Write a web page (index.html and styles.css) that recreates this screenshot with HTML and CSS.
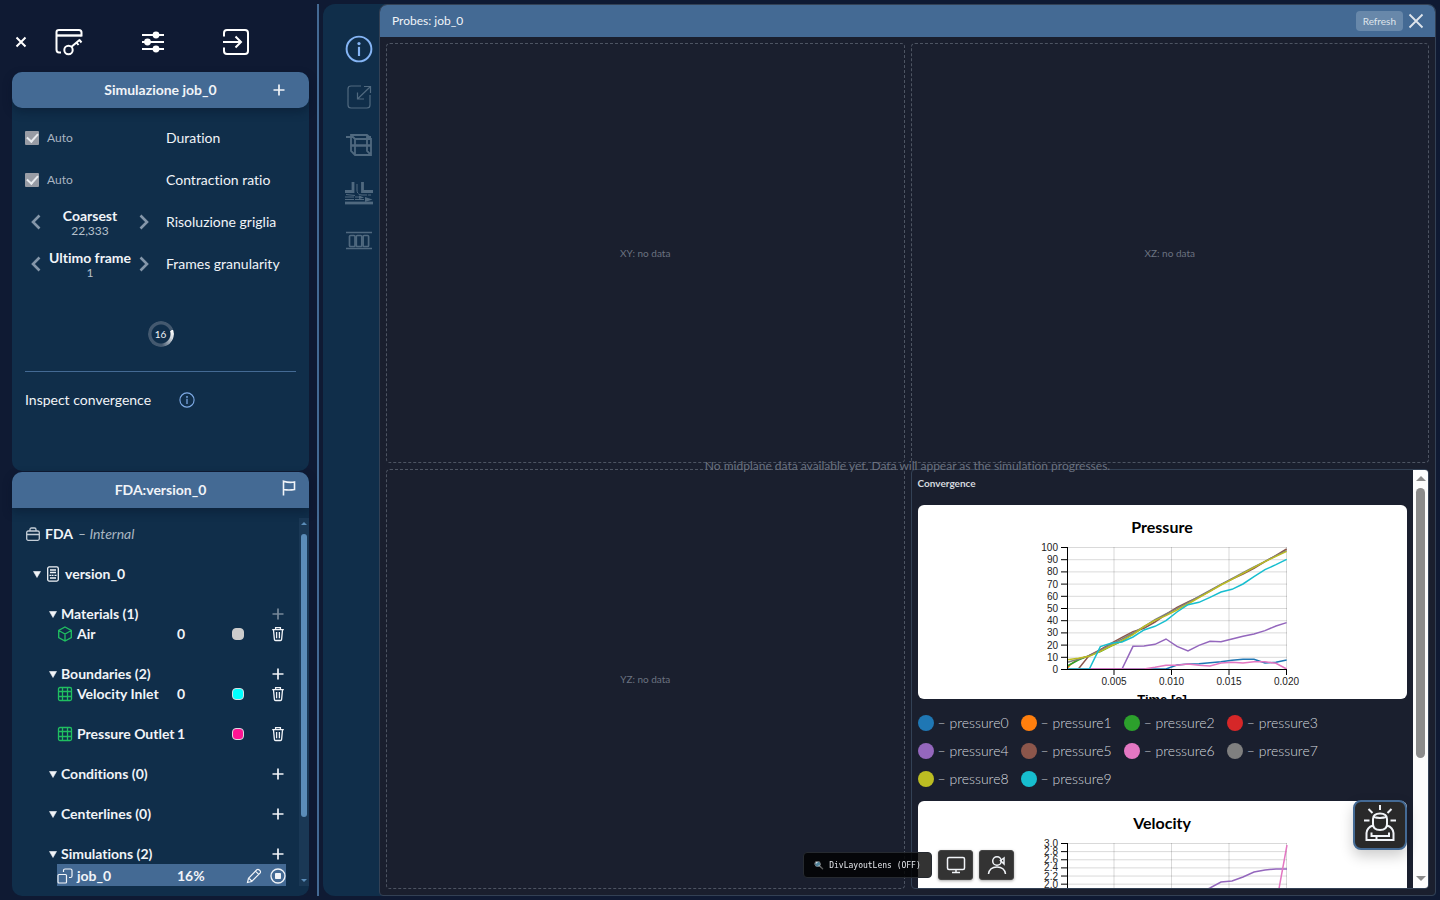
FILE: index.html
```html
<!DOCTYPE html>
<html lang="it">
<head>
<meta charset="utf-8">
<title>Simulazione job_0</title>
<link rel="stylesheet" href="styles.css">
</head>
<body>
<svg class="defs" aria-hidden="true">
  <symbol id="plus" viewBox="0 0 12 12"><path d="M6 .5v11M.5 6h11" fill="none" stroke="currentColor" stroke-width="1.7"/></symbol>
  <symbol id="trash" viewBox="0 0 16 16"><path d="M2.2 3.7h11.6M5.6 3.5V1.6h4.8v1.9M3.5 4l.9 9.4q.1 1.1 1.2 1.1h4.8q1.1 0 1.2-1.1l.9-9.4M6.6 6v6.2M9.4 6v6.2" fill="none" stroke="currentColor" stroke-width="1.3"/></symbol>
  <symbol id="mesh" viewBox="0 0 16 16"><rect x="1.500" y="1.500" width="13" height="13" rx="1.500" fill="none" stroke="currentColor" stroke-width="1.300"/><path d="M1 5.500h14M1 10.500h14M5.500 1v14M10.500 1v14" fill="none" stroke="currentColor" stroke-width="1.300"/></symbol>
  <symbol id="info" viewBox="0 0 26 26"><circle cx="13" cy="13" r="11.500" fill="none" stroke="currentColor" stroke-width="1.800"/><circle cx="13" cy="8" r="1.500" fill="currentColor"/><path d="M13 11v8.500" fill="none" stroke="currentColor" stroke-width="2"/></symbol>
  <symbol id="left" viewBox="0 0 10 16"><path d="M8.500 1.500 2 8l6.500 6.500" fill="none" stroke="currentColor" stroke-width="2.600"/></symbol>
  <symbol id="right" viewBox="0 0 10 16"><path d="M1.500 1.500 8 8l-6.500 6.500" fill="none" stroke="currentColor" stroke-width="2.600"/></symbol>
  <symbol id="caret" viewBox="0 0 8 7"><path d="M.5.500h7L4 6.500z" fill="currentColor" stroke="currentColor" stroke-width=".6"/></symbol>
</svg>
<div class="app">
  <aside class="sidebar">
    <nav class="topbar">
      <button class="icon-btn close" aria-label="Chiudi"><svg width="12" height="12" viewBox="0 0 12 12"><path d="M1.500 1.500l9 9M10.500 1.500l-9 9" fill="none" stroke="currentColor" stroke-width="2"/></svg></button>
      <button class="icon-btn" aria-label="Accesso"><svg width="28" height="28" viewBox="0 0 28 28" fill="none" stroke="currentColor" stroke-width="2"><path d="M6 24.500H4Q1.500 24.500 1.500 21.500V4Q1.500 2 4 2h20q2.500 0 2.500 2.500v4"/><path d="M1.500 7.500h25" stroke-width="2.400"/><circle cx="13.500" cy="22" r="4.200"/><path d="M16.500 18.800 24.500 12M24 11.500l2.500 3M21.500 14.500l2 2.500"/></svg></button>
      <button class="icon-btn" aria-label="Impostazioni"><svg width="24" height="24" viewBox="0 0 24 24"><path d="M1 5h22M1 12h22M1 19h22" stroke="currentColor" stroke-width="2"/><g fill="currentColor"><circle cx="15" cy="5" r="3.400"/><circle cx="6.500" cy="12" r="3.400"/><circle cx="15" cy="19" r="3.400"/></g></svg></button>
      <button class="icon-btn" aria-label="Esci"><svg width="28" height="28" viewBox="0 0 28 28" fill="none" stroke="currentColor" stroke-width="2"><path d="M1 8.500V5Q1 2 4 2h18q3 0 3 3v18q0 3-3 3H4q-3 0-3-3v-3.500M0 14h18M12.500 8.500 18 14l-5.500 5.500"/></svg></button>
    </nav>

    <section class="panel">
      <header class="panel-head rounded"><h2>Simulazione job_0</h2><button class="icon-btn head-action plus-head" aria-label="Aggiungi"><svg width="12" height="12"><use href="#plus"/></svg></button></header>
      <div class="settings">
        <div class="setting"><label class="auto"><input type="checkbox" checked disabled>Auto</label><span>Duration</span></div>
        <div class="setting"><label class="auto"><input type="checkbox" checked disabled>Auto</label><span>Contraction ratio</span></div>
        <div class="setting"><div class="stepper"><button class="icon-btn" aria-label="Precedente"><svg width="10" height="16"><use href="#left"/></svg></button><span class="step-value"><b>Coarsest</b><small>22,333</small></span><button class="icon-btn" aria-label="Successivo"><svg width="10" height="16"><use href="#right"/></svg></button></div><span>Risoluzione griglia</span></div>
        <div class="setting"><div class="stepper"><button class="icon-btn" aria-label="Precedente"><svg width="10" height="16"><use href="#left"/></svg></button><span class="step-value"><b>Ultimo frame</b><small>1</small></span><button class="icon-btn" aria-label="Successivo"><svg width="10" height="16"><use href="#right"/></svg></button></div><span>Frames granularity</span></div>
        <div class="progress"><span>16</span></div>
        <hr>
        <div class="inspect"><span>Inspect convergence</span><button class="icon-btn" aria-label="Informazioni"><svg width="16" height="16"><use href="#info"/></svg></button></div>
      </div>
    </section>

    <section class="panel grow">
      <header class="panel-head"><h2>FDA:version_0</h2><button class="icon-btn head-action flag-head" aria-label="Segnala"><svg width="14" height="16" viewBox="0 0 14 16"><path d="M1.500 15.500V1.200Q7 3 12.500 2v7.500Q7 10.500 1.500 9.500" fill="none" stroke="currentColor" stroke-width="1.600"/></svg></button></header>
      <div class="tree-wrap">
        <div class="tree">
          <div class="row project"><svg width="14" height="14" viewBox="0 0 14 14" fill="none" stroke="currentColor" stroke-width="1.300"><rect x=".7" y="4" width="12.600" height="9.300" rx="1.500"/><path d="M4 4V2.500Q4 1 5.500 1h3Q10 1 10 2.500V4M.7 7.500h12.600"/></svg><b>FDA</b><i>– Internal</i></div>
          <div class="row version apart"><svg width="8" height="7"><use href="#caret"/></svg><svg width="12" height="16" viewBox="0 0 12 16" fill="none" stroke="currentColor" stroke-width="1.300"><rect x=".7" y=".9" width="10.600" height="14.200" rx="1.500"/><path d="M3 4h6M3 6.500h6M2.500 9.300h2M5 9.300h1.500M7.500 9.300h2M3 12h6"/></svg><b>version_0</b></div>
          <div class="row group apart"><svg width="8" height="7"><use href="#caret"/></svg><b>Materials (1)</b><button class="icon-btn dim" aria-label="Aggiungi"><svg width="12" height="12"><use href="#plus"/></svg></button></div>
          <div class="row leaf"><svg class="green" width="16" height="16" viewBox="0 0 16 16" fill="none" stroke="currentColor" stroke-width="1.300"><path d="M8 1l6.300 3.500v7L8 15l-6.300-3.500v-7zM1.700 4.500 8 8l6.300-3.500M8 8v7"/></svg><b class="name">Air</b><b>0</b><span class="actions"><button class="swatch silver" aria-label="Colore"></button><button class="icon-btn" aria-label="Elimina"><svg width="16" height="16"><use href="#trash"/></svg></button></span></div>
          <div class="row group apart"><svg width="8" height="7"><use href="#caret"/></svg><b>Boundaries (2)</b><button class="icon-btn" aria-label="Aggiungi"><svg width="12" height="12"><use href="#plus"/></svg></button></div>
          <div class="row leaf"><svg class="green" width="16" height="16"><use href="#mesh"/></svg><b class="name">Velocity Inlet</b><b>0</b><span class="actions"><button class="swatch cyan" aria-label="Colore"></button><button class="icon-btn" aria-label="Elimina"><svg width="16" height="16"><use href="#trash"/></svg></button></span></div>
          <div class="row leaf apart"><svg class="green" width="16" height="16"><use href="#mesh"/></svg><b class="name">Pressure Outlet</b><b>1</b><span class="actions"><button class="swatch pink" aria-label="Colore"></button><button class="icon-btn" aria-label="Elimina"><svg width="16" height="16"><use href="#trash"/></svg></button></span></div>
          <div class="row group apart"><svg width="8" height="7"><use href="#caret"/></svg><b>Conditions (0)</b><button class="icon-btn" aria-label="Aggiungi"><svg width="12" height="12"><use href="#plus"/></svg></button></div>
          <div class="row group apart"><svg width="8" height="7"><use href="#caret"/></svg><b>Centerlines (0)</b><button class="icon-btn" aria-label="Aggiungi"><svg width="12" height="12"><use href="#plus"/></svg></button></div>
          <div class="row group apart"><svg width="8" height="7"><use href="#caret"/></svg><b>Simulations (2)</b><button class="icon-btn" aria-label="Aggiungi"><svg width="12" height="12"><use href="#plus"/></svg></button></div>
          <div class="row leaf selected"><svg width="16" height="16" viewBox="0 0 16 16" fill="none" stroke="currentColor" stroke-width="1.200"><rect x="1" y="6.500" width="8.500" height="8.500" rx="1"/><path d="M6.500 4V2.500Q6.500 1 8 1h5.500Q15 1 15 2.500V8q0 1.500-1.500 1.500H12"/></svg><b class="name">job_0</b><b>16%</b><span class="actions tight"><button class="icon-btn" aria-label="Modifica"><svg width="16" height="16" viewBox="0 0 16 16" fill="none" stroke="currentColor" stroke-width="1.200"><path d="M1.500 14.500l1-4.200 8.300-8.500q1.200-1 2.500.2l.7.700q1 1.200 0 2.400L5.700 13.500zM9.500 3.200l3.200 3.200M2.500 10.300q2.200.5 3.200 3.200"/></svg></button><button class="icon-btn" aria-label="Ferma"><svg width="16" height="16" viewBox="0 0 16 16"><circle cx="8" cy="8" r="7" fill="none" stroke="currentColor" stroke-width="1.300"/><rect x="5" y="5" width="6" height="6" rx=".8" fill="currentColor"/></svg></button></span></div>
        </div>
        <div class="tree-scroll"><i class="arrow up"></i><i class="thumb"></i><i class="arrow down"></i></div>
      </div>
    </section>
  </aside>
  <div class="divider"></div>

  <main class="stage">
    <nav class="tools">
      <button class="icon-btn active" aria-label="Informazioni"><svg width="28" height="28"><use href="#info"/></svg></button>
      <button class="icon-btn" aria-label="Riduci"><svg width="28" height="28" viewBox="0 0 28 28" fill="none" stroke="currentColor" stroke-width="1.200"><path d="M16 3H6Q3 3 3 6v16q0 3 3 3h16q3 0 3-3V12M25.500 10V3.500H19M25 4 12.500 16M12.500 9.500V16H19"/></svg></button>
      <button class="icon-btn" aria-label="Volume"><svg width="28" height="28" viewBox="0 0 28 28" fill="none" stroke="currentColor" stroke-width="1.800"><path d="M1 6h5M6 4h16l4 3.500v16.500H10l-4-4zM6 4l4 4h16M10 8v16M22 4v16l4 4M22 6h4"/><path d="M6 14.500h20" stroke-width="2.500"/></svg></button>
      <button class="icon-btn" aria-label="Flusso"><svg width="28" height="28" viewBox="0 0 28 28" fill="none" stroke="currentColor"><path d="M0 12.500h8V3M28 12.500H17.500V3" stroke-width="2.800"/><path d="M0 24h28" stroke-width="2.800"/><path d="M12 5v6q0 5 5 5h9M0 18h16M0 20.500h23M1 15.500l9 1" stroke-dasharray="9 1"/><path d="M20 18l7.500 2.500L20 23zM14 16.500l5 2-5 1.500z" fill="currentColor" stroke="none"/></svg></button>
      <button class="icon-btn" aria-label="Fotogrammi"><svg width="28" height="28" viewBox="0 0 28 28" fill="none" stroke="currentColor" stroke-width="1.700"><path d="M1 5.500h26M1 21.500h26"/><rect x="4.500" y="8.500" width="5.500" height="11" rx="1"/><rect x="11.300" y="8.500" width="5.500" height="11" rx="1"/><rect x="18.100" y="8.500" width="5.500" height="11" rx="1"/></svg></button>
    </nav>
    <section class="window">
      <header class="window-head"><span>Probes: job_0</span><div class="window-actions"><button class="refresh">Refresh</button><button class="icon-btn" aria-label="Chiudi"><svg width="16" height="16" viewBox="0 0 16 16"><path d="M1.500 1.500l13 13M14.500 1.500l-13 13" stroke="currentColor" stroke-width="1.800"/></svg></button></div></header>
      <div class="views">
        <div class="view">XY: no data</div>
        <div class="view">XZ: no data</div>
        <div class="view">YZ: no data</div>
        <div class="convergence">
          <div class="conv-content">
            <h3>Convergence</h3>
            <div class="card">
              <svg width="301" height="194" id="pressure">
                <text class="title" x="150" y="28">Pressure</text>
                <g class="grid"></g>
                <g class="series" transform="translate(48 30) scale(.3333)">
                  <polyline stroke="#1f77b4" points="22,402 318,402 351,390 384,387 417,386 450,383 483,380 516,376 549,373 582,373 615,384 648,382 680,375"/>
                  <polyline stroke="#ff7f0e" points="22,400 30,390 55,372 88,363"/>
                  <polyline stroke="#2ca02c" points="22,393 55,375 88,362 121,350 153,333 186,318 219,297 252,277"/>
                  <polyline stroke="#9467bd" points="22,402 186,402 219,334 252,333 285,328 318,312 351,334 384,348 417,331 450,319 483,320 516,312 549,304 582,297 615,287 648,273 680,263"/>
                  <polyline stroke="#8c564b" points="22,402 55,402 88,361 121,344 153,325 186,307 219,290 252,280 285,261 318,238 351,217 384,201 417,186 450,168 483,149 516,132 549,117 582,100 615,80 648,61 680,42"/>
                  <polyline stroke="#e377c2" points="22,402 252,402 285,397 318,391 351,391 384,387 417,391 450,393 483,384 516,382 549,384 582,380 615,380 648,385 680,402"/>
                  <polyline stroke="#7f7f7f" points="22,382 55,373 88,362 121,346 153,328 186,312 219,294 252,275 285,254 318,237 351,221 384,203 417,184 450,166 483,148 516,131 549,113 582,96 615,79 648,62 680,47"/>
                  <polyline stroke="#bcbd22" points="22,374 55,370 88,364 121,349 153,333 186,317 219,299 252,274 285,256 318,242 351,225 384,207 417,188 450,169 483,150 516,133 549,115 582,97 615,80 648,64 680,49"/>
                  <polyline stroke="#17becf" points="22,402 88,402 121,335 153,325 186,321 219,306 252,285 285,274 318,257 351,231 384,209 417,202 450,187 483,171 516,163 549,147 582,125 615,104 648,89 680,73"/>
                </g>
                <g class="axes"></g>
                <text class="axis-title" x="150" y="199">Time [s]</text>
              </svg>
            </div>
            <ul class="legend">
              <li><i class="c0"></i>– pressure0</li><li><i class="c1"></i>– pressure1</li><li><i class="c2"></i>– pressure2</li><li><i class="c3"></i>– pressure3</li>
              <li><i class="c4"></i>– pressure4</li><li><i class="c5"></i>– pressure5</li><li><i class="c6"></i>– pressure6</li><li><i class="c7"></i>– pressure7</li>
              <li><i class="c8"></i>– pressure8</li><li><i class="c9"></i>– pressure9</li>
            </ul>
            <div class="card">
              <svg width="301" height="194" id="velocity">
                <text class="title" x="150" y="28">Velocity</text>
                <g class="grid"></g>
                <g class="series">
                  <polyline stroke="#9467bd" points="55,164 187,92 198,87 209,81 220,80 231,76 242,71 253,69 264,68 275,68"/>
                  <polyline stroke="#e377c2" points="55,164 264,104 275,44"/>
                </g>
                <g class="axes"></g>
                <text class="axis-title" x="150" y="199">Time [s]</text>
              </svg>
            </div>
          </div>
          <div class="conv-scroll"><i class="arrow up"></i><i class="thumb"></i><i class="arrow down"></i></div>
        </div>
        <p class="notice">No midplane data available yet. Data will appear as the simulation progresses.</p>
      </div>
    </section>
  </main>
</div>
<div class="dev-tools">
  <button class="lens"><span>🔍</span>DivLayoutLens (OFF)</button>
  <button class="dev-btn" aria-label="Schermo"><svg width="20" height="20" viewBox="0 0 20 20" fill="none" stroke="currentColor" stroke-width="1.500"><rect x="1.500" y="2.500" width="17" height="12" rx="1.500"/><path d="M10 14.500v3M6 17.500h8"/></svg></button>
  <button class="dev-btn" aria-label="Utente"><svg width="20" height="20" viewBox="0 0 20 20" fill="none" stroke="currentColor" stroke-width="1.500"><circle cx="10" cy="6" r="4.300"/><path d="M1.500 19q1-7 8.500-7t8.500 7M17 3l-3.500 2.500L17 9z"/></svg></button>
</div>
<button class="assistant" aria-label="Assistente"><svg width="34" height="38" viewBox="0 0 34 38" fill="none" stroke="currentColor" stroke-width="2"><path d="M17 1v5M5.500 5l4 4M28.500 5l-4 4M1 16.500h5.500M27.500 16.500H33M10 15q0-5.500 7-5.500t7 5.500v5q0 6-7 6t-7-6zM10 12.500q7 3 14 0M10 21.500q-6 2-6.500 7.500v7h27v-7q-.5-5.500-6.500-7.500M8.500 28.500V32H26v-3.500M8.500 32h5v4"/></svg></button>
<script src="charts.js"></script>
</body>
</html>
```
FILE: charts.js
```js
const left = 55, right = 275, top_ = 42, bottom = 164;

function drawAxes(id, yLabels) {
  const svg = document.getElementById(id);
  let grid = '';
  let axes = `<path class="axis" d="M${left - 6} ${bottom}.5H${right}M${left}.5 ${top_}V${bottom}"/>`;
  yLabels.forEach((label, i) => {
    const y = bottom + 0.5 - i * (bottom - top_) / (yLabels.length - 1);
    grid += `<path d="M${left} ${y}H${right}"/>`;
    axes += `<path class="axis" d="M${left - 6} ${y}H${left}"/><text x="${left - 9}" y="${y + 3.5}" text-anchor="end">${label}</text>`;
  });
  ['0.005', '0.010', '0.015', '0.020'].forEach((label, i) => {
    const x = 102 + i * 57.5;
    grid += `<path d="M${x} ${top_}V${bottom}"/>`;
    axes += `<path class="axis" d="M${x} ${bottom}v6"/><text x="${x}" y="180" text-anchor="middle">${label}</text>`;
  });
  svg.querySelector('.grid').innerHTML = grid;
  svg.querySelector('.axes').innerHTML = axes;
}

drawAxes('pressure', Array.from({ length: 11 }, (_, i) => i * 10));
drawAxes('velocity', Array.from({ length: 16 }, (_, i) => (i / 5).toFixed(1)));
```
FILE: styles.css
```css
* { box-sizing: border-box; }
body { margin: 0; background: #0f1a33; color: #f1f4f8; font: 14px/20px Lato, sans-serif; font-variant-ligatures: none; overflow: hidden; }
h2, h3, p, ul { margin: 0; padding: 0; }
svg { display: block; flex: none; }
.defs { position: absolute; width: 0; height: 0; }
button { font: inherit; color: inherit; cursor: pointer; }
.icon-btn { display: flex; align-items: center; justify-content: center; padding: 0; border: 0; background: none; }
.app { display: flex; height: 100vh; padding: 4px 4px 4px 0; }

.sidebar { display: flex; flex-direction: column; flex: 0 0 317px; padding: 0 8px 0 12px; }
.topbar { display: flex; align-items: center; height: 68px; padding: 8px 0 0 3px; }
.topbar .icon-btn { width: 84px; color: #fff; }
.topbar .icon-btn.close { width: 12px; }
.panel { display: flex; flex-direction: column; background: #102e4a; border-radius: 10px; }
.panel + .panel { margin-top: 1px; }
.panel.grow { flex: 1; min-height: 0; }
.panel-head { display: flex; align-items: center; justify-content: center; position: relative; height: 36px; background: #446a94; border-radius: 10px 10px 0 0; box-shadow: 0 4px 10px rgba(5, 18, 38, .4); }
.panel-head.rounded { border-radius: 10px; }
.panel-head h2 { font-size: 14px; font-weight: 700; }
.head-action { position: absolute; top: 0; height: 36px; }
.plus-head { right: 24px; }
.flag-head { right: 13px; height: 32px; }

.settings { padding: 9px 13px 61px; }
.setting { display: grid; grid-template-columns: 130px 1fr; column-gap: 11px; align-items: center; height: 42px; }
.auto { display: flex; align-items: center; gap: 8px; font-size: 12px; color: #a9b4c1; }
.auto input { appearance: none; display: grid; place-items: center; width: 14px; height: 14px; margin: 0; background: #989ca5; border-radius: 1px; }
.auto input::after { content: ""; width: 5px; height: 9px; margin-bottom: 3px; border: solid #e7eaee; border-width: 0 2px 2px 0; transform: rotate(42deg); }
.stepper { display: flex; align-items: center; justify-content: space-between; padding: 0 6px; }
.stepper .icon-btn { flex: none; width: 10px; color: #8496a9; }
.step-value { display: flex; flex-direction: column; align-items: center; padding-top: 1px; white-space: nowrap; line-height: 15px; }
.step-value small { font-size: 12px; color: #b6c0cb; }
.progress { position: relative; display: grid; place-items: center; width: 26px; height: 26px; margin: 36px auto 24px; font-size: 10px; }
.progress::before { content: ""; position: absolute; inset: 0; border-radius: 50%; background: conic-gradient(#44596f 0 70deg, #fff 72deg, #d5dbe1 110deg, #44596f 175deg); mask: radial-gradient(circle, transparent 9px, #000 10px); }
hr { height: 1px; margin: 0 0 18px; border: 0; background: #446a94; }
.inspect { display: flex; align-items: center; gap: 28px; }
.inspect .icon-btn { color: #7fabe6; }

.tree-wrap { display: flex; flex: 1; min-height: 0; padding: 10px 0; }
.tree { flex: 1; padding: 6px 13px 0 13px; overflow: hidden; }
.row { display: flex; align-items: center; height: 20px; white-space: nowrap; }
.row.apart { margin-top: 20px; }
.project { gap: 5px; padding-left: 1px; }
.project svg { color: #c3cdd7; }
.project i { color: #a9b5c1; }
.version { gap: 6px; padding-left: 8px; }
.group { gap: 4px; padding-left: 24px; }
.group .icon-btn { width: 16px; margin-left: auto; }
.dim { opacity: .45; }
.leaf { margin-left: 32px; }
.leaf .name { width: 100px; margin-left: 4px; }
.actions { display: flex; align-items: center; gap: 26px; margin-left: auto; }
.actions.tight { gap: 8px; }
.green { color: #20bf61; }
.swatch { width: 12px; height: 12px; padding: 0; border: 1px solid #d8dbe0; border-radius: 4px; }
.silver { background: #ccc; border-color: #ccc; }
.cyan { background: #0ff; }
.pink { background: #ff1493; }
.selected { height: 22px; padding-top: 2px; background: #446a94; }
.tree-scroll, .conv-scroll { display: flex; flex-direction: column; align-items: center; }
.tree-scroll { width: 10px; background: #1a3855; }
.arrow { flex: none; width: 0; height: 0; border: solid transparent; }
.tree-scroll .arrow { border-width: 3px; }
.tree-scroll .up { border-bottom-color: #5b8cb8; border-top-width: 0; margin: 4px 0 9px; }
.tree-scroll .down { border-top-color: #5b8cb8; border-bottom-width: 0; margin: auto 0 4px; }
.tree-scroll .thumb { width: 6px; flex: 0 0 77%; border-radius: 3px; background: #5b8cb8; }
.divider { flex: none; width: 2px; margin-right: 4px; background: #446a94; }

.stage { display: flex; flex: 1; min-width: 0; background: #102e4a; border-radius: 12px 8px 4px 12px; }
.tools { display: flex; flex-direction: column; gap: 20px; width: 56px; padding: 31px 0 0 22px; color: #50697f; }
.tools .icon-btn { width: 28px; height: 28px; }
.tools .active { color: #85b5f5; }
.window { display: flex; flex-direction: column; flex: 1; min-width: 0; border: 1px solid #334155; border-radius: 8px 8px 4px 4px; background: #1a1f2e; overflow: hidden; }
.window-head { display: flex; align-items: center; justify-content: space-between; flex: 0 0 32px; padding: 0 12px; background: #446a94; font-size: 12px; }
.window-actions { display: flex; align-items: center; gap: 5px; margin-right: -1px; color: #dfe5ec; }
.refresh { height: 20px; padding: 0 7px; border: 0; border-radius: 4px; background: #6888aa; font-size: 10px; line-height: 20px; }
.views { position: relative; display: grid; grid-template: minmax(0, 1fr) minmax(0, 1fr) / minmax(0, 1fr) minmax(0, 1fr); gap: 6px; flex: 1; min-height: 0; padding: 6px; }
.view { display: grid; place-items: center; border: 1px dashed #4d5462; border-radius: 4px; font-size: 10px; color: #6b7280; }
.notice { position: absolute; top: 50%; left: 50%; transform: translate(-50%, -50%); font-size: 12px; color: #6b7280; white-space: nowrap; }
.convergence { display: flex; min-height: 0; border: 1px solid #334155; border-radius: 4px; overflow: hidden; }
.conv-content { flex: 1; min-width: 0; padding: 6px; overflow: hidden; }
.conv-content h3 { margin-bottom: 15px; font-size: 10px; line-height: 14px; color: #d5d9df; }
.card { display: flex; justify-content: center; height: 194px; border-radius: 6px; background: #fff; overflow: hidden; }
.legend { display: grid; grid-template-columns: repeat(4, max-content); column-gap: 12px; padding: 10px 0 8px; list-style: none; font-weight: 300; color: #d5d9df; }
.legend li { display: flex; align-items: center; gap: 4px; height: 28px; }
.legend i { width: 16px; height: 16px; border-radius: 50%; }
.c0 { background: #1f77b4; } .c1 { background: #ff7f0e; } .c2 { background: #2ca02c; } .c3 { background: #d62728; } .c4 { background: #9467bd; }
.c5 { background: #8c564b; } .c6 { background: #e377c2; } .c7 { background: #7f7f7f; } .c8 { background: #bcbd22; } .c9 { background: #17becf; }
.conv-scroll { width: 15px; background: #fcfcfc; }
.conv-scroll .arrow { border-width: 5px; }
.conv-scroll .up { border-top-width: 0; border-bottom-color: #8b8b8b; margin: 6px 0 7px; }
.conv-scroll .down { border-bottom-width: 0; border-top-color: #8b8b8b; margin: auto 0 7px; }
.conv-scroll .thumb { flex: 0 0 270px; width: 9px; border-radius: 5px; background: #8b8b8b; }

.card text { font: 10px "Liberation Sans", sans-serif; fill: #222; }
.card .title { font: 700 16px Lato, sans-serif; fill: #000; text-anchor: middle; }
.card .axis-title { font: 700 13px "Liberation Sans", sans-serif; fill: #000; text-anchor: middle; }
.grid path { stroke: #000; stroke-opacity: .15; }
.axis { fill: none; stroke: #000; }
.series polyline { fill: none; stroke-width: 1.5px; vector-effect: non-scaling-stroke; }

.dev-tools { position: fixed; left: 803px; bottom: 20px; display: flex; align-items: center; gap: 6px; }
.lens { display: flex; align-items: center; justify-content: center; gap: 5px; min-width: 129px; height: 26px; padding: 0 8px; border: 1px solid #262a30; border-radius: 4px; background: rgba(0, 0, 0, .8); color: #e5e7eb; font: 8px "DejaVu Sans Mono", monospace; white-space: nowrap; }
.dev-btn { display: grid; place-items: center; width: 35px; height: 30px; padding: 0; border: 1px solid #444; border-radius: 3px; background: #333; box-shadow: 0 1px 3px rgba(0, 0, 0, .35); }
.assistant { position: fixed; right: 33px; bottom: 50px; display: grid; place-items: center; width: 54px; height: 50px; padding: 0 0 4px; border: 2px solid #446a94; border-radius: 8px; background: #292929; box-shadow: 0 6px 14px rgba(0, 0, 0, .2); }
```
